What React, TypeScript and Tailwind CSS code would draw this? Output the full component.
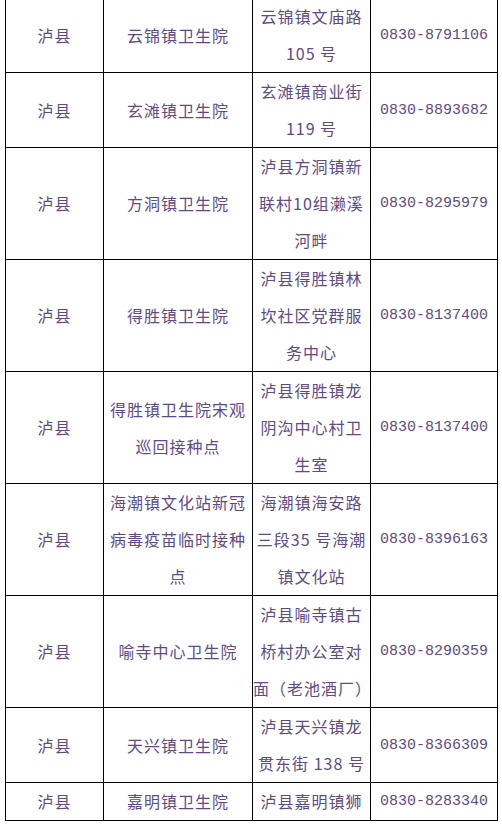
const rows: { county: string; name: string[]; addr: string[]; phone: string; last?: boolean }[] = [
  { county: '泸县', name: ['云锦镇卫生院'], addr: ['云锦镇文庙路', '105 号'], phone: '0830-8791106' },
  { county: '泸县', name: ['玄滩镇卫生院'], addr: ['玄滩镇商业街', '119 号'], phone: '0830-8893682' },
  { county: '泸县', name: ['方洞镇卫生院'], addr: ['泸县方洞镇新', '联村10组濑溪', '河畔'], phone: '0830-8295979' },
  { county: '泸县', name: ['得胜镇卫生院'], addr: ['泸县得胜镇林', '坎社区党群服', '务中心'], phone: '0830-8137400' },
  { county: '泸县', name: ['得胜镇卫生院宋观', '巡回接种点'], addr: ['泸县得胜镇龙', '阴沟中心村卫', '生室'], phone: '0830-8137400' },
  { county: '泸县', name: ['海潮镇文化站新冠', '病毒疫苗临时接种', '点'], addr: ['海潮镇海安路', '三段35 号海潮', '镇文化站'], phone: '0830-8396163' },
  { county: '泸县', name: ['喻寺中心卫生院'], addr: ['泸县喻寺镇古', '桥村办公室对', '面（老池酒厂）'], phone: '0830-8290359' },
  { county: '泸县', name: ['天兴镇卫生院'], addr: ['泸县天兴镇龙', '贯东街 138 号'], phone: '0830-8366309' },
  { county: '泸县', name: ['嘉明镇卫生院'], addr: ['泸县嘉明镇狮'], phone: '0830-8283340', last: true },
];

function Lines({ items }: { items: string[] }) {
  return (
    <>
      {items.map((t) => (
        <div key={t} className="whitespace-nowrap">
          {t}
        </div>
      ))}
    </>
  );
}

export default function App() {
  return (
    <div className="w-[502px] h-[826px] overflow-hidden bg-white">
      <table
        className="ml-[5px] mt-[-3px] w-[492px] table-fixed border-collapse text-center text-[16px] tracking-[1px] text-[#5e4a86]"
        style={{ fontFamily: '"Noto Sans CJK SC", sans-serif' }}
      >
        <colgroup>
          <col className="w-[98px]" />
          <col className="w-[149px]" />
          <col className="w-[118px]" />
          <col className="w-[127px]" />
        </colgroup>
        <tbody>
          {rows.map((r, i) => (
            <tr key={i} className={r.last ? 'h-[36px]' : ''}>
              <td className="border border-black p-0 leading-[37px] align-middle">{r.county}</td>
              <td className="border border-black p-0 leading-[37px] align-middle">
                <Lines items={r.name} />
              </td>
              <td className={`border border-black p-0 align-middle ${r.last ? 'leading-[35px]' : 'leading-[37px]'}`}>
                <Lines items={r.addr} />
              </td>
              <td
                className="border border-black p-0 leading-[37px] align-middle text-[15px] tracking-normal"
                style={{ fontFamily: '"Liberation Mono", monospace' }}
              >
                {r.phone}
              </td>
            </tr>
          ))}
        </tbody>
      </table>
    </div>
  );
}
